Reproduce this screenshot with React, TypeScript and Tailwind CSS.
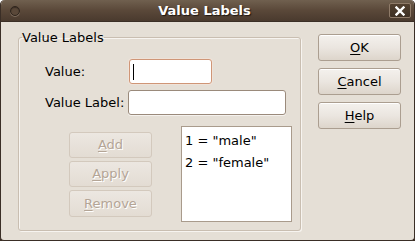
import React from "react";

const font = { fontFamily: '"DejaVu Sans", "Liberation Sans", sans-serif' };

function Btn({ label, u, disabled, className = "" }: { label: string; u: number; disabled?: boolean; className?: string }) {
  const pre = label.slice(0, u);
  const ch = label.slice(u, u + 1);
  const post = label.slice(u + 1);
  return (
    <div
      className={
        "flex items-center justify-center rounded-[3px] border text-[13px] " +
        (disabled
          ? "border-[#d3c9bd] bg-gradient-to-b from-[#ece7e1] to-[#e3dcd3] text-[#b4a596] [text-shadow:1px_1px_0_#ffffff] "
          : "border-[#ab9e90] bg-gradient-to-b from-[#f4f1ed] via-[#ebe6e0] to-[#ddd5cb] text-black shadow-[inset_0_1px_0_#ffffff] ") +
        className
      }
    >
      <span>
        {pre}
        <span className="underline underline-offset-2">{ch}</span>
        {post}
      </span>
    </div>
  );
}

export default function App() {
  return (
    <div className="w-[415px] h-[241px] bg-[#3c2f25] rounded-t-[5px]" style={font}>
      <div className="w-[415px] h-[241px] flex flex-col rounded-t-[5px] rounded-b-[4px] overflow-hidden border-x border-b border-[#3a2e26] bg-[#e5dfd6]">
        {/* Title bar */}
        <div className="h-[22px] shrink-0 flex items-center bg-gradient-to-b from-[#70604f] via-[#5a4839] to-[#4a3a2e] border-b border-[#3b2f26] relative">
          <div className="ml-[9px] w-[10px] h-[10px] rounded-full border border-[#2e241c] shadow-[0_1px_0_#7d6b5c,inset_0_1px_1px_#3a2e25] bg-[#5a4839]" />
          <div className="flex-1 text-center text-white font-bold text-[13px] leading-none [text-shadow:1px_1px_1px_#1e1610]">
            Value Labels
          </div>
          <div className="mr-[3px] w-[22px] h-[15px] rounded-[2px] border border-[#8f7b69] bg-gradient-to-b from-[#52402f] to-[#3e3024] flex items-center justify-center">
            <svg width="10" height="10" viewBox="0 0 10 10">
              <path d="M1.5 1.5 L8.5 8.5 M8.5 1.5 L1.5 8.5" stroke="#ffffff" strokeWidth="2.4" strokeLinecap="square" />
            </svg>
          </div>
        </div>

        {/* Body */}
        <div className="flex flex-1 pl-[17px] pt-[8px]">
          <fieldset className="w-[283px] h-[201px] border border-[#c9beb1] rounded-[3px] shadow-[inset_1px_1px_0_#f7f4f0,1px_1px_0_#f7f4f0] m-0 p-0">
            <legend className="ml-[3px] px-0 text-[13px] leading-[15px] text-black">Value Labels</legend>
            <div className="grid grid-cols-[83px_auto] gap-y-[6px] pl-[26px] pt-[14px] items-center">
              <div className="text-[13px] text-black">Value:</div>
              <div className="w-[83px] h-[25px] ml-[1px] bg-white border border-[#cf9677] rounded-[3px] shadow-[0_0_0_1px_#efe2d8] flex items-center pl-[3px]">
                <div className="w-[1px] h-[16px] bg-black" />
              </div>
              <div className="text-[13px] text-black">Value Label:</div>
              <div className="w-[158px] h-[25px] bg-white border border-[#9a8a7b] rounded-[3px] shadow-[0_1px_0_#f5f2ee]" />
            </div>
            <div className="flex pl-[50px] pt-[11px] gap-[29px]">
              <div className="flex flex-col gap-[3px] pt-[6px]">
                <Btn label="Add" u={0} disabled className="w-[83px] h-[26px]" />
                <Btn label="Apply" u={0} disabled className="w-[83px] h-[26px]" />
                <Btn label="Remove" u={0} disabled className="w-[83px] h-[27px]" />
              </div>
              <div className="w-[111px] h-[96px] bg-white border border-[#a99b8c] pl-[3px] pt-[3px] text-[13px] text-black">
                <div className="h-[22px] flex items-center">1 = "male"</div>
                <div className="h-[22px] flex items-center">2 = "female"</div>
              </div>
            </div>
          </fieldset>
          <div className="ml-[17px] mt-[4px] flex flex-col gap-[7px]">
            <Btn label="OK" u={0} className="w-[83px] h-[27px]" />
            <Btn label="Cancel" u={0} className="w-[83px] h-[27px]" />
            <Btn label="Help" u={0} className="w-[83px] h-[27px]" />
          </div>
        </div>
      </div>
    </div>
  );
}
